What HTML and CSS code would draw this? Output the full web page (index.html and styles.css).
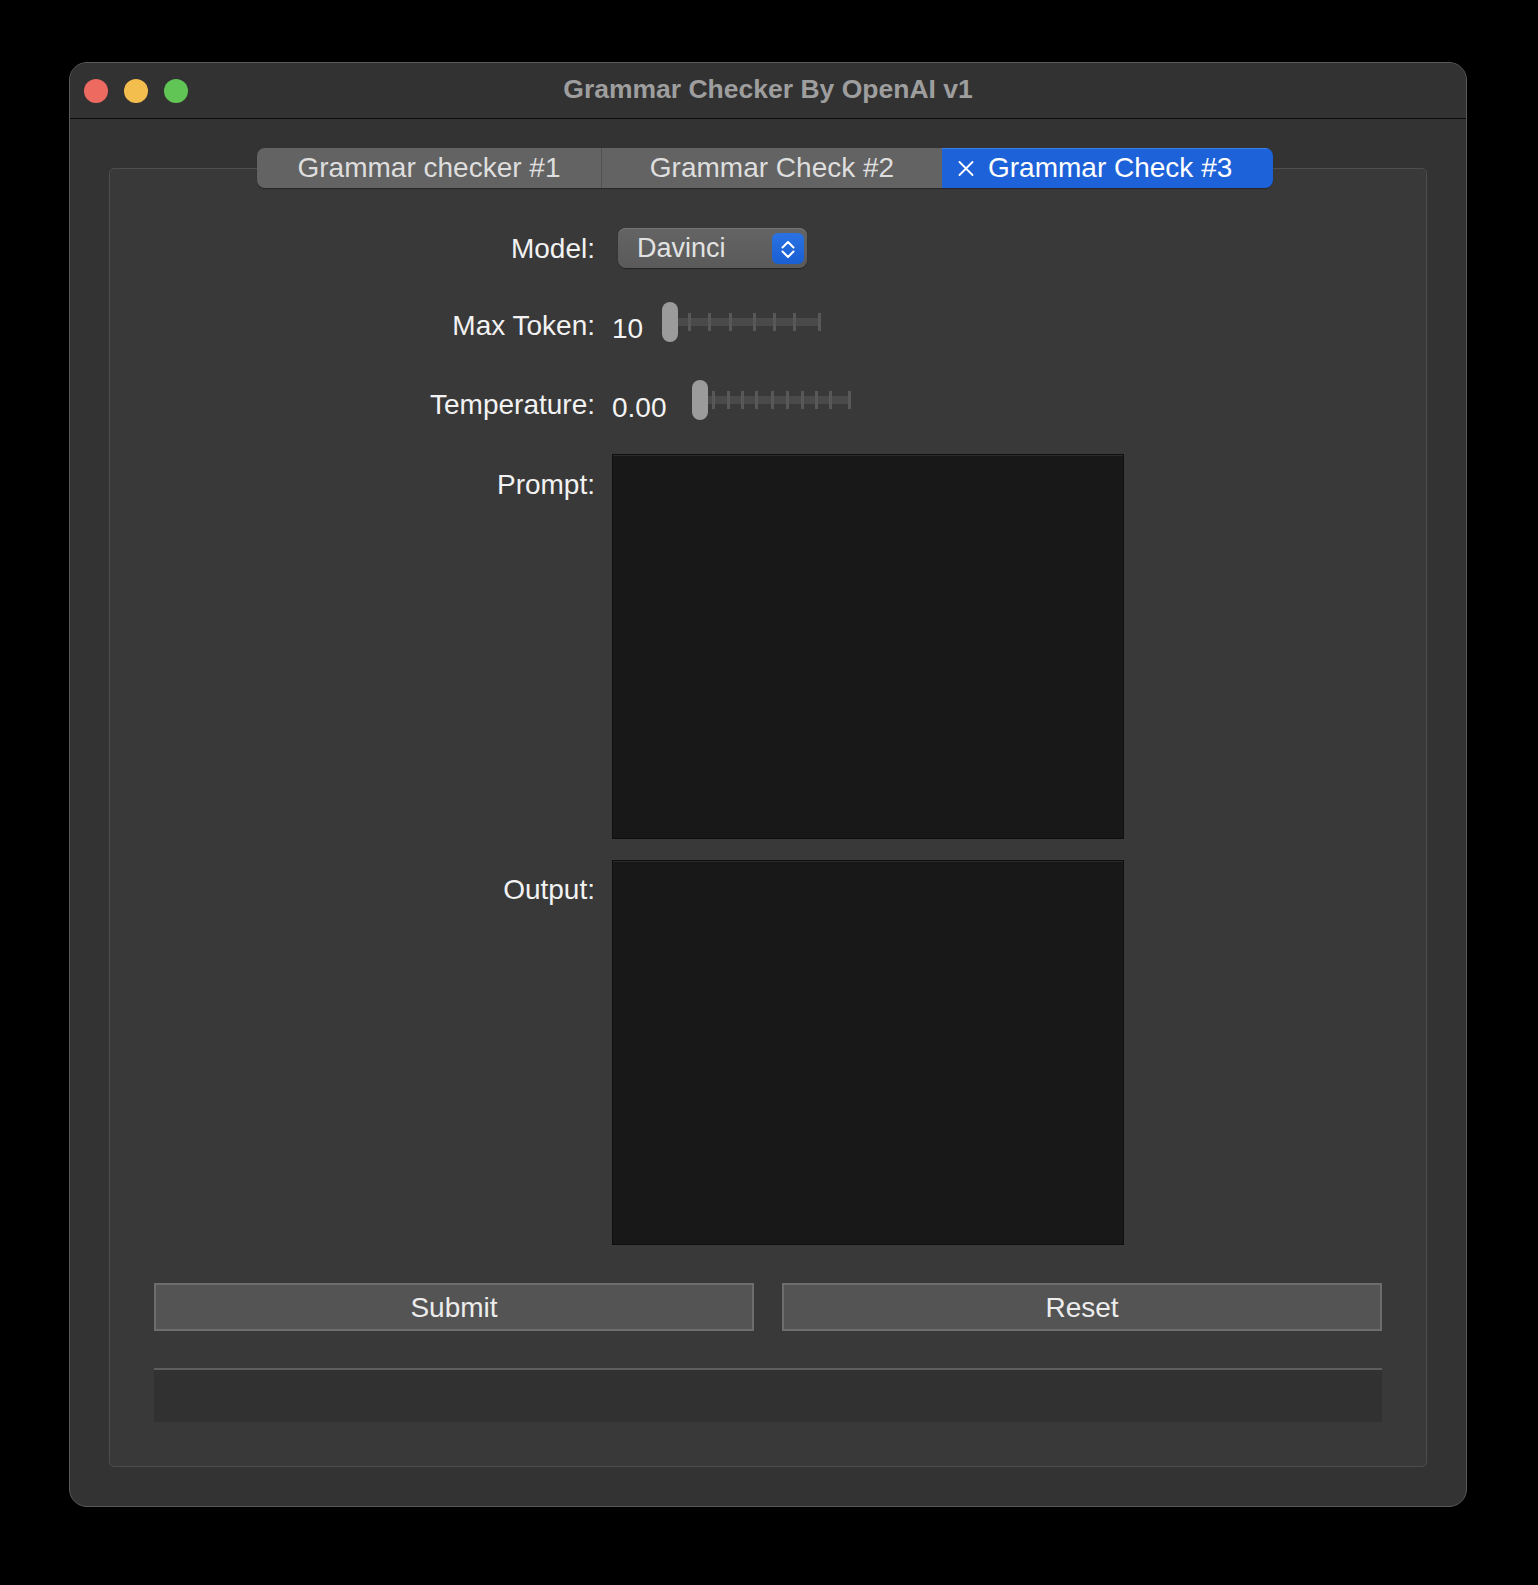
FILE: index.html
```html
<!DOCTYPE html>
<html lang="en">
<head>
<meta charset="utf-8">
<title>Grammar Checker By OpenAI v1</title>
<link rel="stylesheet" href="styles.css">
</head>
<body>
<div class="window">
  <div class="titlebar">
    <div class="lights">
      <span class="light red"></span>
      <span class="light yellow"></span>
      <span class="light green"></span>
    </div>
    <div class="title">Grammar Checker By OpenAI v1</div>
  </div>
  <div class="content">
    <div class="tabbar">
      <div class="tab tab1">Grammar checker #1</div>
      <div class="tab tab2">Grammar Check #2</div>
      <div class="tab tab3 active">
        <svg class="close" width="16" height="15" viewBox="0 0 16 15"><path d="M1.5 1 L14.5 14 M14.5 1 L1.5 14" stroke="#ffffff" stroke-width="1.8" fill="none" stroke-linecap="round"/></svg>
        <span>Grammar Check #3</span>
      </div>
    </div>
    <div class="pane">
      <div class="row row-model">
        <div class="label lbl-model">Model:</div>
        <div class="popup">
          <span class="popup-text">Davinci</span>
          <span class="stepper">
            <svg width="32" height="31" viewBox="0 0 32 31"><path d="M10.5 14.5 L16 9 L21.5 14.5 M10.5 18.5 L16 24 L21.5 18.5" stroke="#ffffff" stroke-width="2" fill="none" stroke-linecap="round" stroke-linejoin="round"/></svg>
          </span>
        </div>
      </div>
      <div class="row row-token">
        <div class="label lbl-token">Max Token:</div>
        <div class="value val-token">10</div>
        <svg class="slider" width="160" height="40" viewBox="0 0 160 40">
          <rect x="10" y="16" width="148" height="8" fill="#4a4a4a"/>
          <g fill="#585858">
            <rect x="26" y="11" width="3" height="18"/>
            <rect x="46" y="11" width="3" height="18"/>
            <rect x="67" y="11" width="3" height="18"/>
            <rect x="91" y="11" width="3" height="18"/>
            <rect x="111" y="11" width="3" height="18"/>
            <rect x="131" y="11" width="3" height="18"/>
            <rect x="156" y="11" width="3" height="18"/>
          </g>
          <rect x="0" y="0" width="16" height="40" rx="8" fill="#9b9b9b"/>
        </svg>
      </div>
      <div class="row row-temp">
        <div class="label lbl-temp">Temperature:</div>
        <div class="value val-temp">0.00</div>
        <svg class="slider" width="160" height="40" viewBox="0 0 160 40">
          <rect x="10" y="16" width="148" height="8" fill="#4a4a4a"/>
          <g fill="#585858">
            <rect x="20" y="11" width="3" height="18"/>
            <rect x="35" y="11" width="3" height="18"/>
            <rect x="49" y="11" width="3" height="18"/>
            <rect x="63" y="11" width="3" height="18"/>
            <rect x="79" y="11" width="3" height="18"/>
            <rect x="94" y="11" width="3" height="18"/>
            <rect x="109" y="11" width="3" height="18"/>
            <rect x="123" y="11" width="3" height="18"/>
            <rect x="137" y="11" width="3" height="18"/>
            <rect x="156" y="11" width="3" height="18"/>
          </g>
          <rect x="0" y="0" width="16" height="40" rx="8" fill="#9b9b9b"/>
        </svg>
      </div>
      <div class="row row-prompt">
        <div class="label lbl-box lbl-prompt">Prompt:</div>
        <div class="textbox box-prompt"></div>
      </div>
      <div class="row row-output">
        <div class="label lbl-box">Output:</div>
        <div class="textbox box-output"></div>
      </div>
      <div class="buttons">
        <div class="button">Submit</div>
        <div class="button">Reset</div>
      </div>
      <div class="status"></div>
    </div>
  </div>
</div>
</body>
</html>
```

FILE: styles.css
```css
html, body {
  margin: 0;
  padding: 0;
  background: #000000;
}

body {
  width: 1538px;
  height: 1585px;
  padding: 62px 0 0 69px;
  box-sizing: border-box;
  font-family: "Liberation Sans", Arial, sans-serif;
}

.window {
  width: 1398px;
  height: 1445px;
  box-sizing: border-box;
  background: #333333;
  border: 1px solid #5a5a5a;
  border-radius: 18px;
  overflow: hidden;
  display: flex;
  flex-direction: column;
}

.titlebar {
  height: 55px;
  flex: none;
  display: flex;
  align-items: center;
  position: relative;
  background: #323232;
  border-bottom: 1px solid #0c0c0c;
}

.lights {
  display: flex;
  gap: 16px;
  padding-left: 14px;
}

.light {
  width: 24px;
  height: 24px;
  border-radius: 50%;
  display: block;
}

.red { background: #ec6a5f; }
.yellow { background: #f4be4f; }
.green { background: #61c555; }

.title {
  position: absolute;
  left: 0;
  right: 0;
  top: 0;
  bottom: 2px;
  display: flex;
  align-items: center;
  justify-content: center;
  font-weight: bold;
  font-size: 26.5px;
  color: #9e9e9e;
  pointer-events: none;
}

.content {
  flex: 1;
  padding: 29px 39px 39px 39px;
  display: flex;
  flex-direction: column;
}

.tabbar {
  position: relative;
  z-index: 1;
  align-self: center;
  display: flex;
  height: 40px;
  border-radius: 8px;
  overflow: hidden;
  margin-bottom: -20px;
  margin-right: 6px;
  box-shadow: 0 1px 1px rgba(0, 0, 0, 0.35);
}

.tab {
  height: 40px;
  display: flex;
  align-items: center;
  justify-content: center;
  font-size: 28px;
  color: #dedede;
  background: #636363;
  box-sizing: border-box;
}

.tab1 { width: 345px; border-right: 1px solid #515151; }
.tab2 { width: 340px; }
.tab3 { width: 331px; justify-content: flex-start; padding-left: 16px; }

.tab.active {
  background: #1d62d8;
  color: #ffffff;
  box-shadow: inset 0 1px 0 #3b7ee6;
}

.close {
  display: block;
  margin-right: 14px;
  flex: none;
}

.pane {
  flex: 1;
  background: #393939;
  border: 1px solid #4e4e4e;
  border-radius: 5px;
  padding: 59px 44px 0 44px;
  display: flex;
  flex-direction: column;
}

.row {
  display: flex;
  align-items: flex-start;
}

.row-model, .row-token, .row-temp {
  height: 40px;
}

.label {
  width: 441px;
  flex: none;
  text-align: right;
  font-size: 28px;
  color: #f2f2f2;
  line-height: 40px;
  margin-right: 17px;
  box-sizing: border-box;
}

.lbl-model { padding-top: 1px; margin-right: 23px; }
.lbl-token { padding-top: 4px; }
.lbl-temp { padding-top: 5px; }
.lbl-box { padding-top: 10px; }
.lbl-prompt { padding-top: 11px; }

.row-token { margin-top: 34px; }
.row-temp { margin-top: 38px; }
.row-prompt { margin-top: 34px; }
.row-output { margin-top: 21px; }

.popup {
  width: 189px;
  height: 40px;
  box-sizing: border-box;
  border-radius: 8px;
  background: linear-gradient(#646464, #5a5a5a);
  box-shadow: inset 0 1px 0 #747474, 0 1px 1px rgba(0, 0, 0, 0.4);
  display: flex;
  align-items: center;
  justify-content: space-between;
  padding: 0 3px 0 19px;
}

.popup-text {
  font-size: 27px;
  color: #e2e2e2;
  line-height: 40px;
}

.stepper {
  width: 32px;
  height: 31px;
  border-radius: 6px;
  background: linear-gradient(#2a72e4, #1a5fd3);
  display: block;
}

.stepper svg { display: block; }

.value {
  font-size: 28px;
  color: #f4f4f4;
  line-height: 40px;
  flex: none;
}

.val-token { width: 50px; padding-top: 7px; }
.val-temp { width: 80px; padding-top: 8px; }

.slider {
  display: block;
  flex: none;
}

.textbox {
  width: 512px;
  background: #181818;
  border: 1px solid #0e0e0e;
  box-shadow: inset 0 1px 0 #2b2b2b;
  box-sizing: border-box;
}

.box-prompt { height: 385px; }
.box-output { height: 385px; }

.buttons {
  display: flex;
  gap: 28px;
  margin-top: 38px;
}

.button {
  flex: 1;
  height: 48px;
  box-sizing: border-box;
  border: 2px solid #6d6d6d;
  background: #545454;
  color: #ececec;
  font-size: 28px;
  display: flex;
  align-items: center;
  justify-content: center;
  padding-top: 1px;
}

.status {
  margin-top: 37px;
  height: 54px;
  background: #313131;
  border-top: 2px solid #5e5e5e;
  box-sizing: border-box;
}
```
